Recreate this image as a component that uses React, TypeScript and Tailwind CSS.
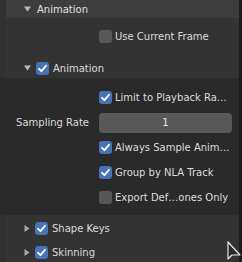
import React from 'react'

const font = { fontFamily: '"DejaVu Sans", "Liberation Sans", sans-serif' }

const Check = ({ on }: { on: boolean }) => (
  <div
    className={`w-[13px] h-[13px] rounded-[3px] flex items-center justify-center shrink-0 ${
      on ? 'bg-[#4772b3]' : 'bg-[#575757]'
    }`}
  >
    {on && (
      <svg width="11" height="11" viewBox="0 0 11 11">
        <path d="M2 5.8 L4.4 8.2 L9 2.8" fill="none" stroke="#ffffff" strokeWidth="1.8" strokeLinecap="round" strokeLinejoin="round" />
      </svg>
    )}
  </div>
)

const Down = () => (
  <svg width="7" height="6" viewBox="0 0 7 6" className="shrink-0">
    <path d="M0 0.5 L7 0.5 L3.5 5.5 Z" fill="#b8b8b8" />
  </svg>
)

const Right = () => (
  <svg width="6" height="7" viewBox="0 0 6 7" className="shrink-0">
    <path d="M0.5 0 L5.5 3.5 L0.5 7 Z" fill="#a8a8a8" />
  </svg>
)

const Option = ({ label, on }: { label: string; on: boolean }) => (
  <div className="h-[25px] flex items-center pl-[93px]">
    <Check on={on} />
    <span className="ml-[3px] text-[10px] text-[#dcdcdc] whitespace-nowrap">{label}</span>
  </div>
)

const SubHeader = ({ label, open }: { label: string; open?: boolean }) => (
  <div className="h-[24px] flex items-center pl-[18px]">
    {open ? <Down /> : <Right />}
    <div className="ml-[5px]">
      <Check on />
    </div>
    <span className="ml-[4px] text-[10px] text-[#dcdcdc]">{label}</span>
  </div>
)

export default function App() {
  return (
    <div className="w-[242px] h-[262px] overflow-hidden bg-[#1d1d1d] flex select-none" style={font}>
      <div className="w-[239px] flex flex-col bg-[#333333] border-l-[6px] border-[#303030]">
        <div className="h-[18px] bg-[#3d3d3d] flex items-center pl-[18px] shrink-0">
          <Down />
          <span className="ml-[6px] text-[10px] text-[#e0e0e0]">Animation</span>
        </div>

        <div className="h-[60px] pt-[6px] shrink-0">
          <Option label="Use Current Frame" on={false} />
          <div className="mt-[7px]">
            <SubHeader label="Animation" open />
          </div>
        </div>

        <div className="bg-[#2a2a2a] h-[137px] pt-[7px] shrink-0 -ml-[6px] pl-[6px]">
          <Option label="Limit to Playback Ra…" on />
          <div className="h-[25px] flex items-center">
            <span className="w-[83px] text-right text-[10px] text-[#dcdcdc]">Sampling Rate</span>
            <div className="ml-[10px] w-[133px] h-[20px] rounded-[4px] bg-[#585858] flex items-center justify-center text-[10px] text-[#e6e6e6]">
              1
            </div>
          </div>
          <Option label="Always Sample Anim…" on />
          <Option label="Group by NLA Track" on />
          <Option label="Export Def…ones Only" on={false} />
        </div>

        <div className="pt-[1px] relative flex-1">
          <SubHeader label="Shape Keys" />
          <SubHeader label="Skinning" />
          <svg className="absolute left-[221px] top-[26px]" width="14" height="22" viewBox="0 0 14 22">
            <path d="M1 1 L1 18 L5 14 L13 14 Z" fill="#2a2a2a" stroke="#e8e8e8" strokeWidth="1.2" strokeLinejoin="round" />
          </svg>
        </div>
      </div>
    </div>
  )
}
